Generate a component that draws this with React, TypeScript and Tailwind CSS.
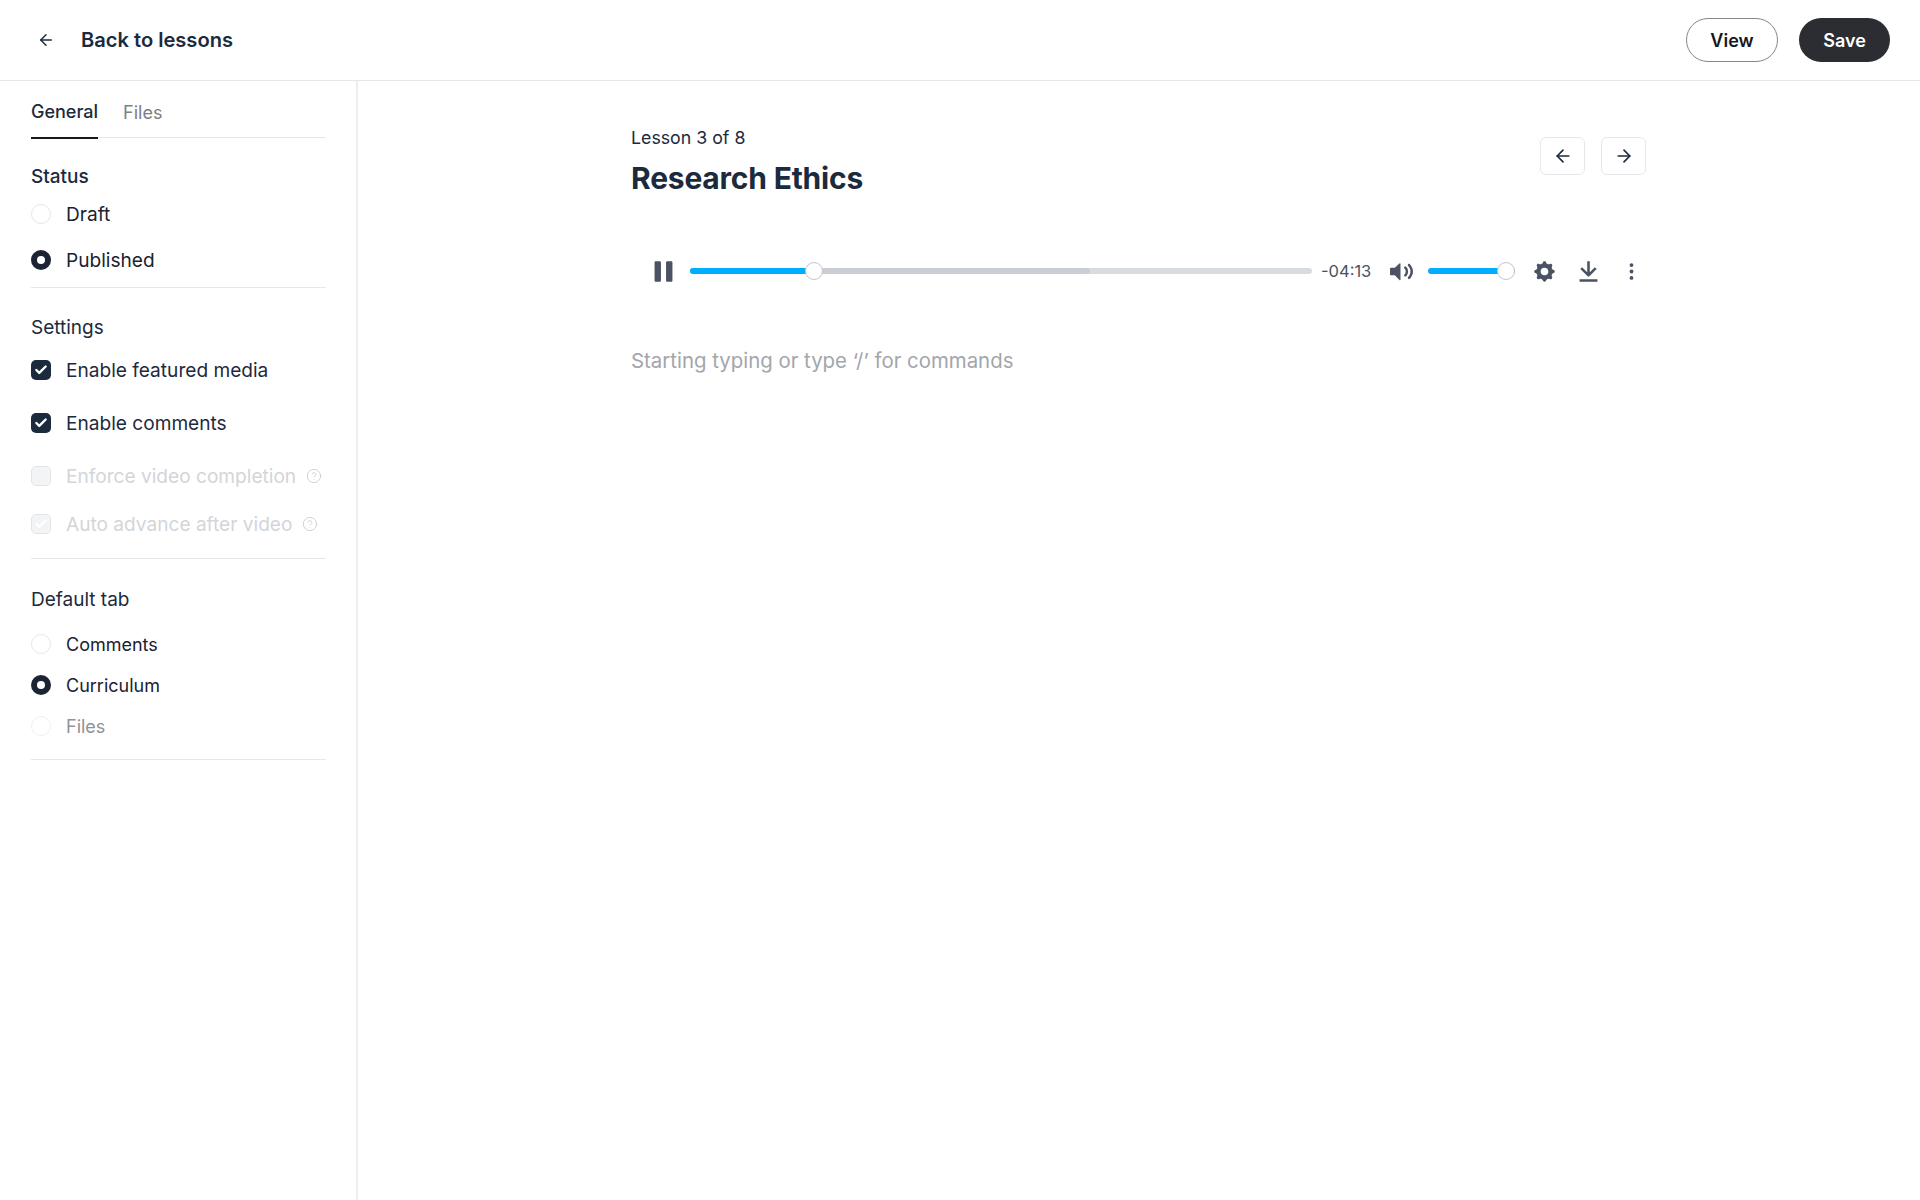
import { ArrowLeft, ArrowRight, Check, CircleHelp } from "lucide-react";

function Radio({ label, checked, faded, tall }: { label: string; checked?: boolean; faded?: boolean; tall?: boolean }) {
  return (
    <div className={`flex items-center gap-[15px] ${tall ? "h-[46px]" : "h-[41px]"}`}>
      {checked ? (
        <span className="flex h-5 w-5 items-center justify-center rounded-full bg-[#1c2433]">
          <span className="h-2 w-2 rounded-full bg-white" />
        </span>
      ) : (
        <span className={`h-5 w-5 rounded-full border ${faded ? "border-[#f0f1f3]" : "border-[#e5e7eb]"}`} />
      )}
      <span className={`pt-[1px] ${tall ? "text-[19.1px]" : "text-[18px]"} ${faded ? "text-[#8f9298]" : "text-[#1a2130]"}`}>{label}</span>
    </div>
  );
}

function CheckRow({ label, checked, height }: { label: string; checked?: boolean; height: string }) {
  return (
    <div className={`flex items-center gap-[15px] ${height}`}>
      <span className="flex h-5 w-5 items-center justify-center rounded-[5px] bg-[#1c2a3e]">
        {checked && <Check className="h-3.5 w-3.5 text-white" strokeWidth={4} />}
      </span>
      <span className="pt-[1px] text-[19.1px] text-[#1c2a3e]">{label}</span>
    </div>
  );
}

function DisabledRow({ label, tick, height }: { label: string; tick?: boolean; height: string }) {
  return (
    <div className={`flex items-center ${height}`}>
      <span className="flex h-5 w-5 items-center justify-center rounded-[5px] border border-[#e1e3e6] bg-[#f3f4f6]">
        {tick && <Check className="h-3.5 w-3.5 text-white" strokeWidth={4} />}
      </span>
      <span className="ml-[15px] pt-[1px] text-[19.1px] text-[#d3d5d9]">{label}</span>
      <CircleHelp className="ml-[10px] h-4 w-4 text-[#cfd2d6]" strokeWidth={1.5} />
    </div>
  );
}

// iconos do player, desenhados em caixa de 18
function PlayerIcon({ className, children }: { className: string; children: React.ReactNode }) {
  return (
    <svg viewBox="0 0 18 18" className={`h-[23px] w-[23px] shrink-0 fill-[#4a5264] ${className}`}>
      {children}
    </svg>
  );
}

export default function App() {
  return (
    <div className="flex h-[1200px] flex-col bg-white font-['Inter',sans-serif]">
      {/* Header */}
      <header className="flex h-[81px] shrink-0 items-center justify-between border-b border-[#e5e7eb] pl-[37px] pr-[30px]">
        <div className="flex items-center gap-[26px]">
          <ArrowLeft className="h-[18px] w-[18px] text-[#1c2a3e]" strokeWidth={2} />
          <span className="text-[20.1px] font-semibold text-[#1c2a3e]">Back to lessons</span>
        </div>
        <div className="flex items-center gap-[21px]">
          <button className="h-[44px] w-[92px] rounded-full border border-[#85878c] text-[18px] font-semibold text-[#16181d]">View</button>
          <button className="h-[44px] w-[91px] rounded-full bg-[#2b2d33] text-[18px] font-semibold text-white">Save</button>
        </div>
      </header>

      <div className="flex min-h-0 flex-1">
        {/* Sidebar */}
        <aside className="w-[358px] shrink-0 border-r-2 border-[#eceef0] pl-[31px] pr-[30px]">
          <div className="flex h-[57px] gap-[25px] border-b border-[#e5e7eb]">
            <div className="flex h-[58px] items-center border-b-2 border-[#16181d] pt-[5px] text-[18px] font-medium text-[#1c2a3e]">General</div>
            <div className="flex h-[57px] items-center pt-[5px] text-[18px] text-[#7c7f85]">Files</div>
          </div>

          <div className="border-b border-[#e5e7eb] pb-[4px] pt-[25px]">
            <div className="text-[19px] font-medium leading-[28px] text-[#1c2a3e]">Status</div>
            <Radio label="Draft" tall />
            <Radio label="Published" checked tall />
          </div>

          <div className="border-b border-[#e5e7eb] pb-[13px] pt-[26px]">
            <div className="mb-[1px] text-[19px] leading-[28px] text-[#1c2a3e]">Settings</div>
            <CheckRow label="Enable featured media" checked height="h-[53px]" />
            <CheckRow label="Enable comments" checked height="h-[53px]" />
            <DisabledRow label="Enforce video completion" height="h-[53px]" />
            <DisabledRow label="Auto advance after video" tick height="h-[43px]" />
          </div>

          <div className="border-b border-[#e5e7eb] pb-[13px] pt-[27px]">
            <div className="mb-[9px] text-[19px] leading-[28px] text-[#1c2a3e]">Default tab</div>
            <Radio label="Comments" />
            <Radio label="Curriculum" checked />
            <Radio label="Files" faded />
          </div>
        </aside>

        {/* Main */}
        <main className="min-w-0 flex-1 pl-[273px] pt-[44px]">
          <div className="w-[1015px]">
            <div className="flex items-start justify-between">
              <div>
                <div className="text-[17.75px] leading-[26px] text-[#1c2a3e]">Lesson 3 of 8</div>
                <h1 className="mt-[7px] text-[30px] font-bold leading-[40px] tracking-[-0.2px] text-[#1c2a3e]">Research Ethics</h1>
              </div>
              <div className="mt-[12px] flex gap-4">
                <button className="flex h-[38px] w-[45px] items-center justify-center rounded-md border border-[#e5e7eb]">
                  <ArrowLeft className="h-5 w-5 text-[#1c2a3e]" strokeWidth={2} />
                </button>
                <button className="flex h-[38px] w-[45px] items-center justify-center rounded-md border border-[#e5e7eb]">
                  <ArrowRight className="h-5 w-5 text-[#1c2a3e]" strokeWidth={2} />
                </button>
              </div>
            </div>

            {/* Player */}
            <div className="mt-[48px] flex h-[50px] items-center pl-[21px]">
              <PlayerIcon className="">
                <path d="M6 1H3c-.6 0-1 .4-1 1v14c0 .6.4 1 1 1h3c.6 0 1-.4 1-1V2c0-.6-.4-1-1-1zM12 1c-.6 0-1 .4-1 1v14c0 .6.4 1 1 1h3c.6 0 1-.4 1-1V2c0-.6-.4-1-1-1h-3z" />
              </PlayerIcon>
              <div className="relative ml-[15px] h-1.5 w-[622px] rounded-full bg-[#d8dbe0]">
                <div className="absolute inset-y-0 left-0 w-[400px] rounded-full bg-[#c9cdd4]" />
                <div className="absolute inset-y-0 left-0 w-[124px] rounded-full bg-[#00aeff]" />
                <div className="absolute left-[115px] top-[-6px] h-[18px] w-[18px] rounded-full border border-[#c4c6ca] bg-white" />
              </div>
              <span className="ml-[9px] w-[51px] whitespace-nowrap text-[16.5px] text-[#4a5264]">-04:13</span>
              <PlayerIcon className="ml-[18px]">
                <path d="M15.6 3.3c-.4-.4-1-.4-1.4 0-.4.4-.4 1 0 1.4C15.4 5.9 16 7.4 16 9c0 1.6-.6 3.1-1.8 4.3-.4.4-.4 1 0 1.4.2.2.5.3.7.3.3 0 .5-.1.7-.3C17.1 12.9 18 11 18 9s-.9-3.9-2.4-5.7z" />
                <path d="M11.282 5.282a.909.909 0 000 1.316c.735.735.995 1.458.995 2.402 0 .936-.425 1.917-.995 2.487a.909.909 0 000 1.316c.145.145.636.262 1.018.156a.725.725 0 00.298-.156C13.773 11.733 14.13 10.16 14.13 9c0-.17-.002-.34-.011-.51-.053-.992-.319-2.005-1.522-3.208a.909.909 0 00-1.316 0zm-7.496.726H.92a.92.92 0 00-.92.92v4.144c0 .508.412.92.92.92h2.866l3.573 3.572A.5.5 0 008.21 15V3a.5.5 0 00-.853-.354L3.786 6.008z" />
              </PlayerIcon>
              <div className="relative ml-[15px] h-1.5 w-[87px] rounded-full bg-[#00aeff]">
                <div className="absolute left-[69px] top-[-6px] h-[18px] w-[18px] rounded-full border border-[#c4c6ca] bg-white" />
              </div>
              <PlayerIcon className="ml-[18px]">
                <path d="M16.135 7.784a2 2 0 01-1.23-2.969c.322-.536.225-.998-.094-1.316l-.31-.31c-.318-.318-.78-.415-1.316-.094a2 2 0 01-2.969-1.23C10.065 1.258 9.669 1 9.219 1h-.438c-.45 0-.845.258-.997.865a2 2 0 01-2.969 1.23c-.536-.322-.999-.225-1.317.093l-.31.31c-.318.318-.415.781-.093 1.317a2 2 0 01-1.23 2.969C1.26 7.935 1 8.33 1 8.781v.438c0 .45.258.845.865.997a2 2 0 011.23 2.969c-.322.536-.225.998.094 1.316l.31.31c.319.319.782.415 1.316.094a2 2 0 012.969 1.23c.151.607.547.865.997.865h.438c.45 0 .845-.258.997-.865a2 2 0 012.969-1.23c.535.321.997.225 1.316-.094l.31-.31c.318-.318.415-.781.094-1.316a2 2 0 011.23-2.969c.607-.151.865-.547.865-.997v-.438c0-.451-.26-.846-.865-.997zM9 12a3 3 0 110-6 3 3 0 010 6z" />
              </PlayerIcon>
              <PlayerIcon className="ml-[21px]">
                <path d="M9 13c.3 0 .5-.1.7-.3L15.4 7 14 5.6l-4 4V1H8v8.6l-4-4L2.6 7l5.7 5.7c.2.2.4.3.7.3zM2 15h14v2H2z" />
              </PlayerIcon>
              <PlayerIcon className="ml-[20px]">
                <circle cx="9" cy="4" r="1.5" />
                <circle cx="9" cy="9" r="1.5" />
                <circle cx="9" cy="14" r="1.5" />
              </PlayerIcon>
            </div>

            <p className="mt-[51px] text-[20.4px] leading-[28px] text-[#a3a6ab]">Starting typing or type ‘/’ for commands</p>
          </div>
        </main>
      </div>
    </div>
  );
}
